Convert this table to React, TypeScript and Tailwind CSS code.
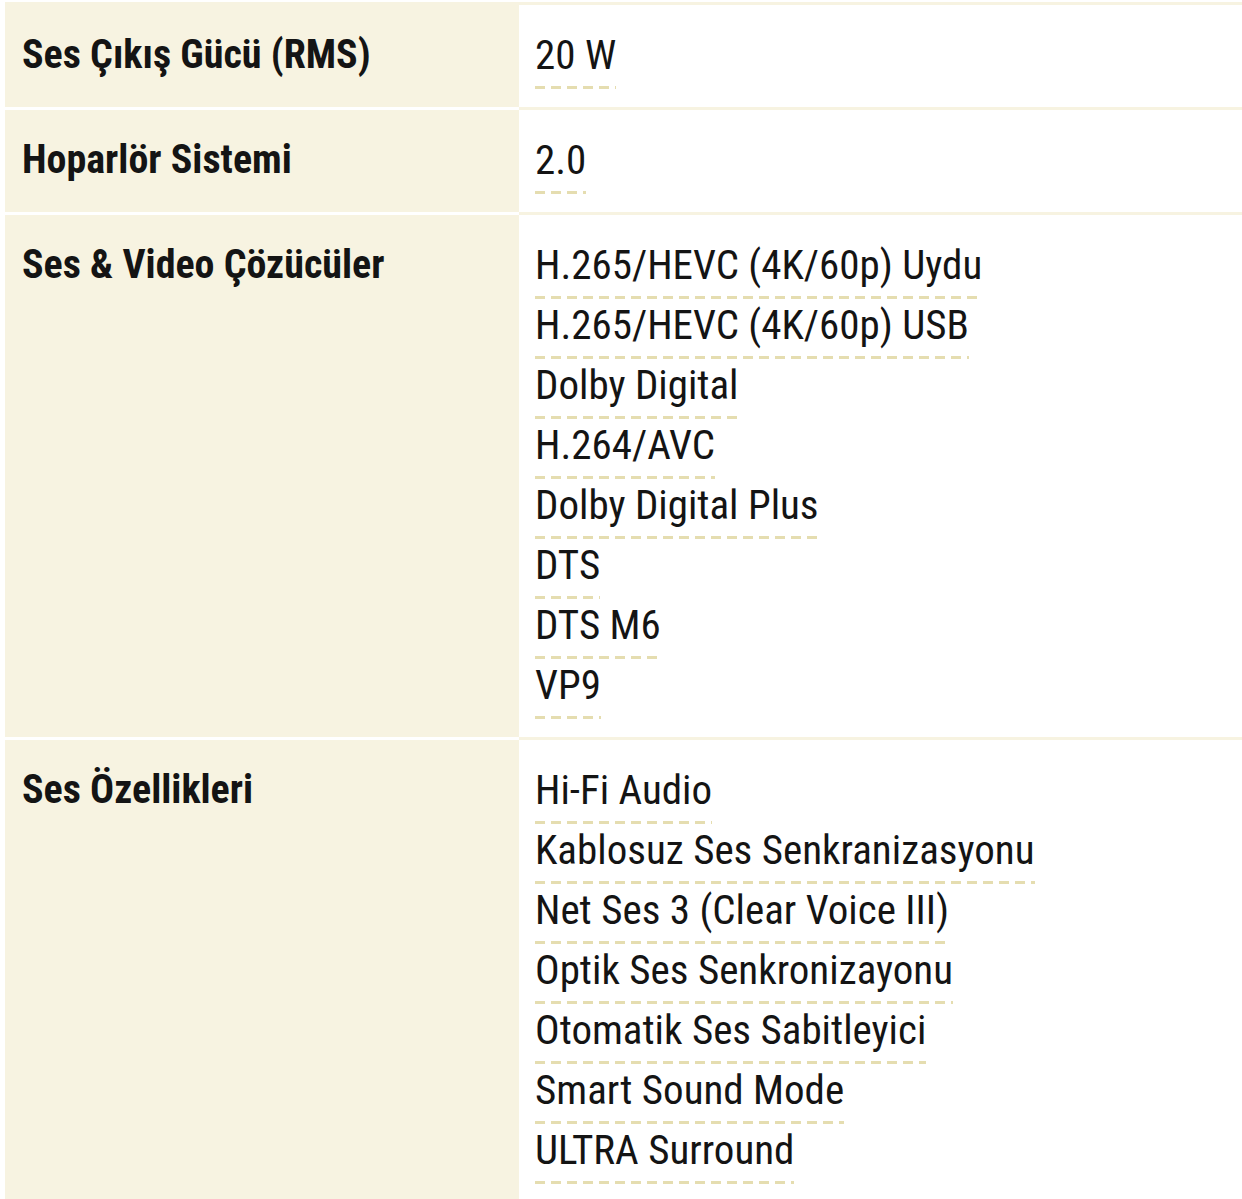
// Teknik özellikler tablosu — ses bölümü
// sol sütun: bej zemin + kalın başlık, sağ sütun: beyaz zemin + kesikli alt çizgili değerler
const rows: { label: string; values: string[] }[] = [
  { label: "Ses Çıkış Gücü (RMS)", values: ["20 W"] },
  { label: "Hoparlör Sistemi", values: ["2.0"] },
  {
    label: "Ses & Video Çözücüler",
    values: [
      "H.265/HEVC (4K/60p) Uydu",
      "H.265/HEVC (4K/60p) USB",
      "Dolby Digital",
      "H.264/AVC",
      "Dolby Digital Plus",
      "DTS",
      "DTS M6",
      "VP9",
    ],
  },
  {
    label: "Ses Özellikleri",
    values: [
      "Hi-Fi Audio",
      "Kablosuz Ses Senkranizasyonu",
      "Net Ses 3 (Clear Voice III)",
      "Optik Ses Senkronizayonu",
      "Otomatik Ses Sabitleyici",
      "Smart Sound Mode",
      "ULTRA Surround",
    ],
  },
];

export default function App() {
  return (
    <main className="min-h-screen bg-white pt-[2px] pl-[5px] font-['Roboto_Condensed','Liberation_Sans',sans-serif] text-[#141414]">
      {rows.map((row, i) => (
        <div key={row.label} className="flex">
          {/* başlık hücresi — satırlar arası beyaz boşluk */}
          <div
            className={
              i === 0
                ? "w-[514px] shrink-0 bg-[#f7f3e1] border-t-[3px] border-[#f7f3e1] pl-[17px] pt-[28px]"
                : "w-[514px] shrink-0 bg-[#f7f3e1] border-t-[3px] border-white pl-[17px] pt-[28px]"
            }
          >
            <h3 className="text-[40px] leading-[44px] font-bold">{row.label}</h3>
          </div>
          {/* değer hücresi — üstte bej çizgi */}
          <div className="flex-1 border-t-[3px] border-[#f7f3e1] pl-[16px] pt-[28px] pb-[18px]">
            <ul className="flex flex-col items-start gap-[4px]">
              {row.values.map((v) => (
                <li
                  key={v}
                  className="text-[41px] leading-[44px] pb-[12px] bg-[linear-gradient(to_right,#e5ddb0_10px,transparent_10px)] bg-[length:16px_3px] bg-[position:0_100%] bg-repeat-x"
                >
                  {v}
                </li>
              ))}
            </ul>
          </div>
        </div>
      ))}
    </main>
  );
}
